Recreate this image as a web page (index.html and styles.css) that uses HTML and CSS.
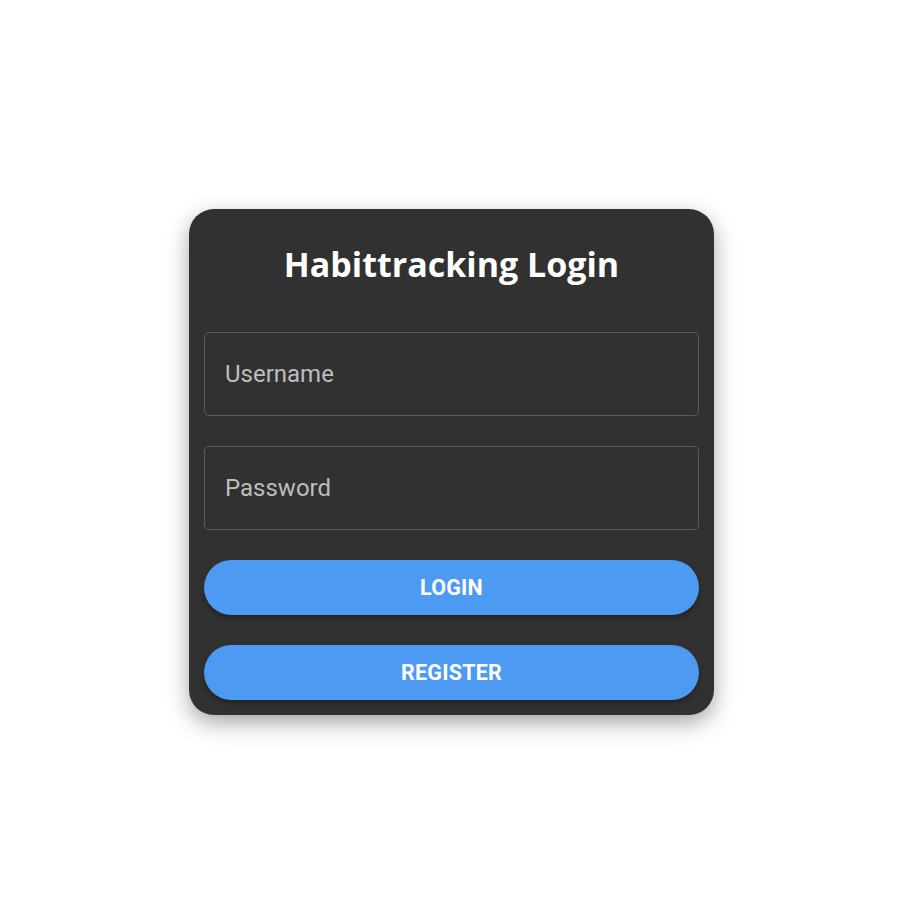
FILE: index.html
```html
<!DOCTYPE html>
<html lang="en">
<head>
<meta charset="utf-8">
<title>Habittracking Login</title>
<link rel="stylesheet" href="styles.css">
</head>
<body>
<main class="page">
  <form class="card" onsubmit="return false">
    <h1 class="title">Habittracking Login</h1>
    <input class="field" type="text" placeholder="Username">
    <input class="field" type="password" placeholder="Password">
    <button class="btn" type="button">Login</button>
    <button class="btn" type="button">Register</button>
  </form>
</main>
</body>
</html>
```
FILE: styles.css
```css
html, body {
  margin: 0;
  background: #ffffff;
}

.page {
  box-sizing: border-box;
  min-height: 100vh;
  display: flex;
  align-items: center;
  justify-content: center;
  padding: 11px 6px 0 0;
}

.card {
  box-sizing: border-box;
  width: 525px;
  padding: 0 15px 15px;
  background: #313131;
  border-radius: 25px;
  box-shadow: 0 8px 22px rgba(0, 0, 0, 0.35);
  display: flex;
  flex-direction: column;
  gap: 30px;
}

.title {
  margin: 31px 0 14px;
  height: 48px;
  line-height: 48px;
  text-align: center;
  color: #ffffff;
  font-family: "Open Sans", "Noto Sans", sans-serif;
  font-weight: 700;
  font-size: 34px;
}

.field {
  box-sizing: border-box;
  height: 84px;
  width: 100%;
  margin: 0;
  padding: 0 20px;
  background: transparent;
  border: 1px solid #5b5b5b;
  border-radius: 5px;
  color: #e0e0e0;
  font-family: Roboto, "Liberation Sans", sans-serif;
  font-size: 24px;
  outline: none;
}

.field::placeholder {
  color: #bdbdbd;
  opacity: 1;
}

.btn {
  box-sizing: border-box;
  height: 55px;
  width: 100%;
  margin: 0;
  border: none;
  border-radius: 28px;
  background: #4d9af2;
  color: #ffffff;
  font-family: Roboto, "Liberation Sans", sans-serif;
  font-weight: 700;
  font-size: 21.5px;
  text-transform: uppercase;
  letter-spacing: 0.2px;
  box-shadow: 0 3px 4px rgba(0, 0, 0, 0.3);
  cursor: pointer;
}
```
